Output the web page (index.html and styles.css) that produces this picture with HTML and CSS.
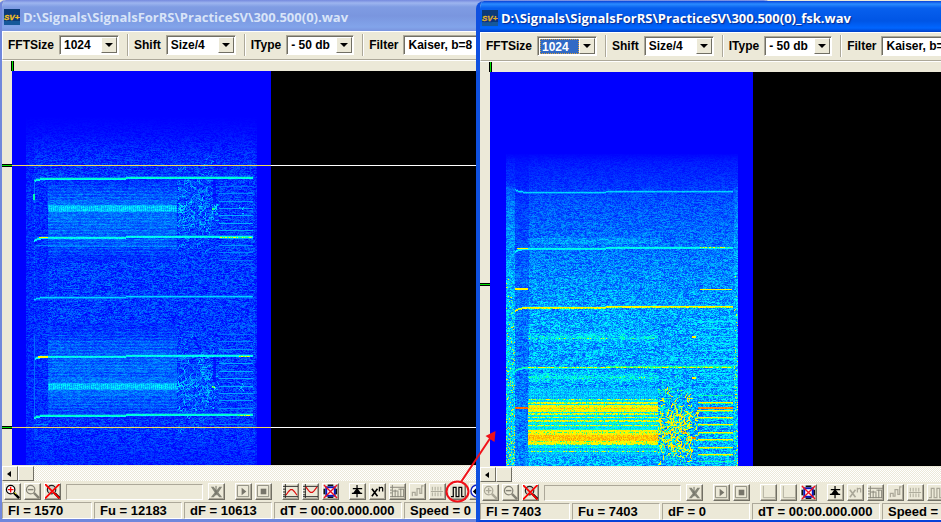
FILE: index.html
```html
<!DOCTYPE html>
<html lang="en">
<head>
    <meta charset="UTF-8">
    <meta name="viewport" content="width=device-width, initial-scale=1.0">
    <title>SV+</title>
    <link rel="stylesheet" href="styles.css">
</head>
<body>
    <!-- shared toolbar icons -->
    <svg class="symbols" aria-hidden="true">
      <symbol id="logo" viewBox="0 0 16 16">
        <rect width="16" height="16" fill="#0b3a78"/>
        <path d="M0 12h16v4H0z" fill="#15589a"/>
        <text x="0" y="11" font-family="Liberation Sans Narrow, Liberation Sans" font-size="8" font-weight="bold" font-style="italic" fill="#f8c020" stroke="#f8c020" stroke-width="0.3">SV+</text>
      </symbol>
      <symbol id="zoomIn" viewBox="0 0 16 16">
        <circle cx="6" cy="6" r="4.5" fill="#fff" stroke="currentColor" stroke-width="1.3"/>
        <path d="M9.500 9.500L15 15" stroke="currentColor" stroke-width="2.500"/>
        <path d="M10 9l2 2" stroke="#ff0" stroke-width="1"/>
        <path d="M3 6h6M6 3v6" stroke="#f00" stroke-width="1.500"/>
      </symbol>
      <symbol id="zoomInOff" viewBox="0 0 16 16">
        <circle cx="6" cy="6" r="4.5" fill="none" stroke="currentColor" stroke-width="1.3"/>
        <path d="M9.500 9.500L15 15" stroke="currentColor" stroke-width="2.500"/>
        <path d="M3 6h6M6 3v6" stroke="currentColor" stroke-width="1.500"/>
      </symbol>
      <symbol id="zoomOut" viewBox="0 0 16 16">
        <circle cx="6" cy="6" r="4.5" fill="none" stroke="currentColor" stroke-width="1.3"/>
        <path d="M9.500 9.500L15 15" stroke="currentColor" stroke-width="2.500"/>
        <path d="M3 6h6" stroke="currentColor" stroke-width="1.500"/>
      </symbol>
      <symbol id="zoomReset" viewBox="0 0 16 16">
        <circle cx="7" cy="6" r="4.5" fill="#d0d0c8" stroke="#222" stroke-width="1.300"/>
        <path d="M10.500 10l5 5" stroke="#000" stroke-width="2.500"/>
        <path d="M0 0l15.500 15.500M15.500 0L0 15.500" stroke="#f00" stroke-width="1.800"/>
      </symbol>
      <symbol id="cut" viewBox="0 0 16 16">
        <path d="M2 3h3l3 4 3-4h3l-4 6 4 5h-3l-3-3-3 3H2l4-5z" fill="#858578"/>
        <path d="M7.500 2v10" stroke="#6c6c62"/>
      </symbol>
      <symbol id="play" viewBox="0 0 16 16">
        <path d="M1.500 1.500h12v12h-12z" fill="none" stroke="#8a887c"/>
        <path d="M6 4l5 4-5 4z" fill="#77756a"/>
      </symbol>
      <symbol id="stop" viewBox="0 0 16 16">
        <path d="M1.500 1.500h12v12h-12z" fill="none" stroke="#8a887c"/>
        <path d="M5 5h6v6H5z" fill="#77756a"/>
      </symbol>
      <symbol id="peak" viewBox="0 0 16 16">
        <path d="M2.500 0v15M0 13.500h16M0 2.500h16M0 5.500h3M0 8.500h3M0 11.500h3" stroke="#222" fill="none"/>
        <path d="M3 12l3-4 2-2h2l2 2 3 4" stroke="#e01010" fill="none" stroke-width="1.300"/>
      </symbol>
      <symbol id="dip" viewBox="0 0 16 16">
        <path d="M2.500 0v15M0 13.500h16M0 2.500h16M0 5.500h3M0 8.500h3M0 11.500h3" stroke="#222" fill="none"/>
        <path d="M3 3l3 4 2 2h2l2-2 3-4" stroke="#e01010" fill="none" stroke-width="1.300"/>
      </symbol>
      <symbol id="axis" viewBox="0 0 16 16">
        <path d="M2.500 1v12.500H15" stroke="#aeab9c" fill="none"/>
      </symbol>
      <symbol id="marks" viewBox="0 0 16 16">
        <path d="M5 1.500h6M5 14h6M1.500 5v6M14 5v6" stroke="#111" stroke-width="2"/>
        <rect x="3.500" y="3.500" width="9" height="9" fill="#fff" stroke="#0818c0" stroke-width="2"/>
        <path d="M1 1l14 14M15 1L1 15" stroke="#f01020" stroke-width="1.500"/>
      </symbol>
      <symbol id="diode" viewBox="0 0 16 16">
        <path d="M7.500 1v13M3 5h10M2 10h11" stroke="#000" stroke-width="1.300"/>
        <path d="M7.500 4l4.500 6H3z" fill="#000"/>
      </symbol>
      <symbol id="power" viewBox="0 0 16 16">
        <path d="M2 5l6 8M8 5l-6 8" stroke="currentColor" stroke-width="1.700"/>
        <path d="M10 8V3M10 4.500q3-2 3.500 0V8" stroke="currentColor" fill="none" stroke-width="1.300"/>
      </symbol>
      <symbol id="grid" viewBox="0 0 16 16">
        <path d="M2.500 1v13M0 3.500h16M0 13.500h15M5.500 6v8M8.500 7v7M11.500 5v9M14.500 5v9M3 7.500h5M9 5.500h5M0 6.500h2M0 9.500h2" stroke="#858377" fill="none"/>
      </symbol>
      <symbol id="steps" viewBox="0 0 16 16">
        <path d="M2.500 13v-4h3v3h2V5h3v5h2V2h2" stroke="#aaa798" stroke-width="1.300" fill="none"/>
      </symbol>
      <symbol id="ticks" viewBox="0 0 16 16">
        <path d="M2.500 3v4M5.500 3v4M8.500 3v4M11.500 3v4M2.500 9v4M5.500 9v4M8.500 9v4M11.500 9v4M1 8h13" stroke="#aaa798" fill="none"/>
      </symbol>
      <symbol id="pulse" viewBox="0 0 16 16">
        <path d="M1 13.500h2.500v-10h3v10h3v-10h3v10H15" stroke="currentColor" stroke-width="1.300" fill="none"/>
      </symbol>
      <symbol id="phase" viewBox="0 0 16 16">
        <circle cx="7.500" cy="7.500" r="6.500" fill="#fff" stroke="#1020c0" stroke-width="1.500"/>
        <path d="M3 8l4-4v8z" fill="#000"/>
      </symbol>
    </svg>

    <div class="desktop">
      <!-- source recording -->
      <section class="window windowBack">
        <header class="titleBar">
          <svg class="logo"><use href="#logo"/></svg>
          <h1>D:\Signals\SignalsForRS\PracticeSV\300.500(0).wav</h1>
        </header>
        <div class="settings">
          <div class="field">
            <label for="size1">FFTSize</label>
            <div class="combo comboSize"><select id="size1"><option>1024</option><option>2048</option></select><i class="arrow"></i></div>
          </div>
          <div class="field">
            <label for="shift1">Shift</label>
            <div class="combo comboShift"><select id="shift1"><option>Size/4</option><option>Size/2</option></select><i class="arrow"></i></div>
          </div>
          <div class="field">
            <label for="type1">IType</label>
            <div class="combo comboType"><select id="type1"><option>- 50 db</option><option>- 70 db</option></select><i class="arrow"></i></div>
          </div>
          <div class="field">
            <label for="filter1">Filter</label>
            <div class="combo comboFilter"><select id="filter1"><option>Kaiser, b=8</option></select><i class="arrow"></i></div>
          </div>
        </div>
        <div class="plot">
          <span class="timeMark"></span>
          <span class="freqMark markHigh"></span>
          <span class="freqMark markLow"></span>
          <div class="screen">
            <canvas id="source" width="259" height="394"></canvas>
            <span class="cursorLine lineHigh"></span>
            <span class="cursorLine lineLow"></span>
          </div>
        </div>
        <div class="scrollBar">
          <button class="scrollLeft" aria-label="Scroll left"></button>
          <button class="scrollThumb" aria-label="Position"></button>
        </div>
        <div class="tools">
          <button aria-label="Zoom in"><svg><use href="#zoomIn"/></svg></button>
          <button class="off" aria-label="Zoom out"><svg><use href="#zoomOut"/></svg></button>
          <button aria-label="Reset zoom"><svg><use href="#zoomReset"/></svg></button>
          <input type="text" aria-label="Comment" readonly>
          <button class="off" aria-label="Cut"><svg><use href="#cut"/></svg></button>
          <button class="off groupStart" aria-label="Play"><svg><use href="#play"/></svg></button>
          <button class="off" aria-label="Stop"><svg><use href="#stop"/></svg></button>
          <button class="groupStart" aria-label="Maximum"><svg><use href="#peak"/></svg></button>
          <button aria-label="Minimum"><svg><use href="#dip"/></svg></button>
          <button aria-label="Clear marks"><svg><use href="#marks"/></svg></button>
          <button class="groupStart" aria-label="Detector"><svg><use href="#diode"/></svg></button>
          <button aria-label="Power"><svg><use href="#power"/></svg></button>
          <button class="off" aria-label="Grid"><svg><use href="#grid"/></svg></button>
          <button class="off" aria-label="Steps"><svg><use href="#steps"/></svg></button>
          <button class="off" aria-label="Ticks"><svg><use href="#ticks"/></svg></button>
          <button aria-label="FSK"><svg><use href="#pulse"/></svg></button>
          <button aria-label="Phase"><svg><use href="#phase"/></svg></button>
        </div>
        <footer class="status">
          <span class="cellFl">Fl = 1570</span>
          <span>Fu = 12183</span>
          <span>dF = 10613</span>
          <span class="cellTime">dT = 00:00.000.000</span>
          <span class="cellSpeed">Speed = 0</span>
        </footer>
      </section>

      <!-- result after FSK detection -->
      <section class="window windowFront">
        <header class="titleBar">
          <svg class="logo"><use href="#logo"/></svg>
          <h1>D:\Signals\SignalsForRS\PracticeSV\300.500(0)_fsk.wav</h1>
        </header>
        <div class="settings">
          <div class="field">
            <label for="size2">FFTSize</label>
            <div class="combo comboSize selected"><select id="size2"><option>1024</option><option>2048</option></select><i class="arrow"></i></div>
          </div>
          <div class="field">
            <label for="shift2">Shift</label>
            <div class="combo comboShift"><select id="shift2"><option>Size/4</option><option>Size/2</option></select><i class="arrow"></i></div>
          </div>
          <div class="field">
            <label for="type2">IType</label>
            <div class="combo comboType"><select id="type2"><option>- 50 db</option><option>- 70 db</option></select><i class="arrow"></i></div>
          </div>
          <div class="field">
            <label for="filter2">Filter</label>
            <div class="combo comboFilter"><select id="filter2"><option>Kaiser, b=8</option></select><i class="arrow"></i></div>
          </div>
        </div>
        <div class="plot">
          <span class="timeMark"></span>
          <span class="freqMark markMiddle"></span>
          <div class="screen">
            <canvas id="result" width="263" height="395"></canvas>
          </div>
        </div>
        <div class="scrollBar">
          <button class="scrollLeft" aria-label="Scroll left"></button>
          <button class="scrollThumb" aria-label="Position"></button>
        </div>
        <div class="tools">
          <button class="off pale" aria-label="Zoom in"><svg><use href="#zoomInOff"/></svg></button>
          <button class="off" aria-label="Zoom out"><svg><use href="#zoomOut"/></svg></button>
          <button aria-label="Reset zoom"><svg><use href="#zoomReset"/></svg></button>
          <input type="text" aria-label="Comment" readonly>
          <button class="off" aria-label="Cut"><svg><use href="#cut"/></svg></button>
          <button class="off groupStart" aria-label="Play"><svg><use href="#play"/></svg></button>
          <button class="off" aria-label="Stop"><svg><use href="#stop"/></svg></button>
          <button class="off groupStart" aria-label="Maximum"><svg><use href="#axis"/></svg></button>
          <button class="off" aria-label="Minimum"><svg><use href="#axis"/></svg></button>
          <button aria-label="Clear marks"><svg><use href="#marks"/></svg></button>
          <button class="groupStart" aria-label="Detector"><svg><use href="#diode"/></svg></button>
          <button class="off pale" aria-label="Power"><svg><use href="#power"/></svg></button>
          <button class="off" aria-label="Grid"><svg><use href="#grid"/></svg></button>
          <button class="off" aria-label="Steps"><svg><use href="#steps"/></svg></button>
          <button class="off" aria-label="Ticks"><svg><use href="#ticks"/></svg></button>
          <button class="off pale" aria-label="FSK"><svg><use href="#pulse"/></svg></button>
        </div>
        <footer class="status">
          <span class="cellFl">Fl = 7403</span>
          <span>Fu = 7403</span>
          <span>dF = 0</span>
          <span class="cellTime">dT = 00:00.000.000</span>
          <span class="cellSpeed">Speed = 0</span>
        </footer>
      </section>

      <!-- pointer from the FSK button to its result -->
      <svg class="pointer" width="60" height="80" viewBox="440 426 60 80">
        <ellipse cx="457.500" cy="491.500" rx="11" ry="10" fill="none" stroke="#f01018" stroke-width="2"/>
        <path d="M461 482L491 437" stroke="#f01018" stroke-width="2"/>
        <path d="M495.500 431l-10 5 9 6z" fill="#f01018"/>
      </svg>
    </div>
    <script src="spectrum.js"></script>
</body>
</html>
```
FILE: styles.css
```css
:root {
    --face: #ece9d8;
    --shadow: #aca899;
    --dark: #716f64;
    --light: #ffffff;
}
* {
    box-sizing: border-box;
}
body {
    margin: 0;
    font: bold 12px "Liberation Sans", Arial, sans-serif;
    color: #000;
    background-color: var(--face);
}
.symbols {
    display: none;
}
.desktop {
    position: relative;
    height: 100vh;
    overflow: hidden;
}
.window {
    position: absolute;
    display: flex;
    flex-direction: column;
    border: 4px solid #0842d8;
    border-top: 0;
    border-radius: 8px 8px 0 0;
    background-color: var(--face);
    overflow: hidden;
}
.windowBack {
    left: -2px;
    right: 18%;
    top: 0;
    bottom: -1px;
    border-color: #7087dc;
}
.windowFront {
    left: 476px;
    right: -240px;
    top: 1px;
    bottom: -2px;
    border-left-color: #0f50e0;
}

/* title bar */
.titleBar {
    display: flex;
    flex: none;
    align-items: center;
    gap: 3px;
    height: 31px;
    margin-left: -4px;
    padding: 2px 2px 0 6px;
    color: #fff;
    background: linear-gradient(#0842d8, #2a8bff 3px, #0860ee 7px, #0055e5 20px, #0066ff 27px, #0040c8);
    text-shadow: 1px 1px 1px #0a2a8c;
}
.windowBack .titleBar {
    color: #d8e4f8;
    background: linear-gradient(#7589de, #9db5ef 3px, #7f9ce3 7px, #7a96df 16px, #82a4ea 27px, #7a94de);
    text-shadow: none;
}
.logo {
    width: 16px;
    height: 16px;
}
h1 {
    margin: 0;
    font: bold 13px "Open Sans", "Noto Sans", sans-serif;
    white-space: nowrap;
}

/* settings row */
.settings {
    display: flex;
    flex: none;
    align-items: center;
    height: 29px;
    border-top: 1px solid var(--light);
    border-left: 1px solid var(--light);
    border-bottom: 1px solid var(--shadow);
    padding: 0 0 2px 5px;
}
.field {
    display: flex;
    align-items: center;
    height: 22px;
    padding-right: 8px;
    white-space: nowrap;
}
.field + .field {
    border-left: 1px solid var(--shadow);
    box-shadow: inset 1px 0 var(--light);
    padding-left: 6px;
}
.field label {
    padding-right: 5px;
}
.combo {
    display: flex;
    height: 20px;
    padding: 1px;
    border: 1px solid;
    border-color: var(--shadow) var(--light) var(--light) var(--shadow);
    background-color: #fff;
    box-shadow: inset 1px 1px var(--dark);
}
.comboSize {
    width: 60px;
}
.comboShift {
    width: 70px;
}
.comboType {
    width: 68px;
}
.comboFilter {
    width: 110px;
}
.combo select {
    flex: 1;
    min-width: 0;
    margin: 1px 0 0 1px;
    padding: 0 0 0 2px;
    border: 0;
    border-radius: 0;
    appearance: none;
    background-color: #fff;
    color: #000;
    font: inherit;
}
.selected select {
    color: #fff;
    background-color: #316ac5;
    border: 1px dotted #d8a040;
    padding-left: 1px;
}
.arrow {
    display: flex;
    flex: none;
    align-items: center;
    justify-content: center;
    width: 16px;
    border: 1px solid;
    border-color: var(--light) var(--dark) var(--dark) var(--light);
    background-color: var(--face);
    pointer-events: none;
}
.arrow::after {
    content: "";
    border: 4px solid transparent;
    border-top-color: #000;
    border-bottom: 0;
}

/* spectrogram */
.plot {
    position: relative;
    display: flex;
    flex: 1;
    min-height: 0;
    padding: 10px 0 0 10px;
    border-top: 1px solid var(--light);
}
.screen {
    position: relative;
    flex: 1;
    overflow: hidden;
    background-color: #000;
}
.screen canvas {
    display: block;
}
.timeMark {
    position: absolute;
    left: 9px;
    top: 0;
    width: 3px;
    height: 10px;
    border: solid #000;
    border-width: 0 1px;
    background-color: #0d0;
}
.freqMark {
    position: absolute;
    left: 0;
    width: 10px;
    height: 3px;
    border: solid #000;
    border-width: 1px 0;
    background-color: #0d0;
}
.markHigh {
    top: 103px;
}
.markLow {
    top: 365px;
}
.markMiddle {
    top: 221px;
}
.cursorLine {
    position: absolute;
    left: 0;
    right: 0;
    height: 1px;
    background: linear-gradient(90deg, #f0d860 259px, #fff 259px);
}
.lineHigh {
    top: 94px;
}
.lineLow {
    top: 356px;
}

/* scroll bar */
.scrollBar {
    display: flex;
    flex: none;
    height: 16px;
    border-top: 1px solid var(--face);
    background: repeating-conic-gradient(#fff 0 25%, var(--face) 0 50%) 0 0 / 2px 2px;
}
button {
    padding: 0;
    border: 1px solid;
    border-color: var(--light) var(--dark) var(--dark) var(--light);
    background-color: var(--face);
    color: #000;
}
.scrollLeft,
.scrollThumb {
    width: 16px;
}
.scrollLeft::after {
    content: "";
    display: block;
    width: 0;
    margin-left: 4px;
    border: 3px solid transparent;
    border-right: 4px solid #000;
    border-left: 0;
}

/* buttons */
.tools {
    display: flex;
    flex: none;
    align-items: center;
    gap: 3px;
    height: 21px;
    padding: 0 2px;
}
.tools button {
    flex: none;
    width: 17px;
    height: 17px;
    overflow: hidden;
    box-shadow: inset -1px -1px var(--shadow);
}
.tools svg {
    display: block;
    width: 15px;
    height: 15px;
}
.tools .off {
    color: #858377;
}
.tools .pale {
    color: #aaa798;
}
.tools .groupStart {
    margin-left: 7px;
}
.tools input {
    flex: none;
    width: 137px;
    height: 16px;
    margin: 0 2px;
    padding: 0 3px;
    border: 1px solid;
    border-color: var(--shadow) var(--light) var(--light) var(--shadow);
    background-color: var(--face);
    font: inherit;
}

/* status bar */
.status {
    display: flex;
    flex: none;
    gap: 2px;
    height: 17px;
    font-size: 13px;
    line-height: 16px;
    white-space: nowrap;
}
.status span {
    flex: none;
    width: 88px;
    padding-left: 5px;
    border: 1px solid;
    border-color: var(--shadow) var(--light) var(--light) var(--shadow);
}
.status .cellFl {
    width: 90px;
}
.status .cellTime {
    width: 128px;
}
.status .cellSpeed {
    flex: 1;
}
.pointer {
    position: absolute;
    left: 440px;
    top: 426px;
}
```
FILE: spectrum.js
```js
// repeatable noise
let seed = 7;
function rnd() {
  seed = (seed + 0x6D2B79F5) | 0;
  let t = Math.imul(seed ^ (seed >>> 15), 1 | seed);
  t = (t + Math.imul(t ^ (t >>> 7), 61 | t)) ^ t;
  return ((t ^ (t >>> 14)) >>> 0) / 4294967296;
}

// level 0..1 -> blue, cyan, green, yellow, red
const stops = [
  [0, 0, 0, 255],
  [0.4, 0, 255, 255],
  [0.5, 0, 255, 150],
  [0.56, 255, 255, 0],
  [0.68, 255, 230, 0],
  [0.8, 255, 160, 0],
  [1, 255, 50, 0]
];
function color(v) {
  v = Math.max(0, Math.min(1, v));
  let i = 1;
  while (stops[i][0] < v) i++;
  const a = stops[i - 1], b = stops[i];
  const k = (v - a[0]) / (b[0] - a[0]);
  return [1, 2, 3].map(n => a[n] + (b[n] - a[n]) * k);
}

// piecewise linear curve through [x, y] points
function curve(points, x) {
  if (x <= points[0][0]) return points[0][1];
  for (let i = 1; i < points.length; i++) {
    const [x1, y1] = points[i - 1], [x2, y2] = points[i];
    if (x <= x2) return y1 + (y2 - y1) * (x - x1) / (x2 - x1);
  }
  return points[points.length - 1][1];
}

class Spectrum {
  constructor(id) {
    this.canvas = document.getElementById(id);
    this.w = this.canvas.width;
    this.h = this.canvas.height;
    this.data = new Float32Array(this.w * this.h);
  }
  // fill(x, y, previous level) gives the new level
  area(x1, y1, x2, y2, fill) {
    for (let y = Math.max(0, y1); y < Math.min(y2, this.h); y++) {
      for (let x = Math.max(0, x1); x < Math.min(x2, this.w); x++) {
        const i = y * this.w + x;
        this.data[i] = fill(x, y, this.data[i]);
      }
    }
  }
  line(x1, x2, y, v, jitter = 0.05, size = 1) {
    this.area(x1, y, x2, y + size, (x, yy, old) => Math.max(old, v + (rnd() - 0.5) * jitter));
  }
  // carrier with the settling curl at its start
  carrier(x1, x2, y, v, curl, glow = 0.85) {
    for (let x = x1; x < x2; x++) {
      const yy = Math.round(y + curl * Math.exp(-(x - x1) / 4) - (x - x1) / (x2 - x1) * 1.2);
      this.line(x, x + 1, yy, v, 0.05);
      this.line(x, x + 1, yy + 1, v * glow, 0.08);
      this.line(x, x + 1, yy - 1, v * 0.4, 0.1);
    }
  }
  // short wavy strokes
  swirl(cx, cy, rx, ry, v, count) {
    for (let n = 0; n < count; n++) {
      let x = cx + (rnd() * 2 - 1) * rx;
      let y = cy + (rnd() + rnd() - 1) * ry;
      let a = rnd() * 6.28;
      for (let s = 0; s < 5; s++) {
        if (Math.abs(x - cx) < rx) this.line(Math.round(x), Math.round(x) + 1, Math.round(y), v, 0.15);
        x += Math.cos(a);
        y += Math.sin(a);
        a += (rnd() - 0.5) * 1.5;
      }
    }
  }
  draw() {
    const ctx = this.canvas.getContext("2d");
    const image = ctx.createImageData(this.w, this.h);
    this.data.forEach((v, i) => {
      const c = color(v);
      image.data.set([c[0], c[1], c[2], 255], i * 4);
    });
    ctx.putImageData(image, 0, 0);
  }
}

function drawSource() {
  const s = new Spectrum("source");
  const level = [[45, 0], [62, 0.02], [85, 0.065], [110, 0.09], [330, 0.095], [365, 0.075], [394, 0.05]];
  let n = 0.5;
  s.area(14, 45, 245, 394, (x, y) => {
    n = n * 0.35 + rnd() * 0.65;
    const edge = x < 22 || x > 242 ? 0.7 : 1;
    return curve(level, y) * edge * Math.max(0, n * 2.8 - 0.4);
  });
  // quiet gap before the data
  s.area(23, 115, 36, 345, (x, y, v) => v * 0.75);

  for (const mid of [137, 315]) {
    const top = mid === 137 ? 108 : 252;
    const end = mid === 137 ? 190 : 348;
    for (let y = top; y < end; y++) {
      const d = Math.abs(y - mid);
      let v = 0.01 + 0.08 * Math.exp(-d / 30) + (y % 3 === 0 ? 0.05 : 0);
      if (mid === 137 && y > 145 && y < 176) v += 0.03;
      if (mid === 315 && y > 268 && y < 300) v += 0.03;
      // fade to the noise at both ends of the block
      v *= Math.min(1, (y - top + 4) / 18, (end - y + 2) / 14);
      if (d < 9) v = 0.11;
      if (d < 4) v = 0.21;
      s.area(36, y, 165, y + 1, (x, yy, old) => old * 0.7 + v + (d < 3 && x % 2 ? 0.07 : 0));
    }
    s.swirl(183, mid, 18, 55, 0.19, 170);
    s.swirl(183, mid, 18, 38, 0.27, 60);
    s.swirl(168, mid, 4, 8, 0.3, 10);
    s.swirl(204, mid, 2, 20, 0.28, 8);
    s.line(200, 203, mid, 0.52, 0.1, 2);
    s.swirl(229, mid, 2, 8, 0.28, 5);
    s.area(201, mid - 30, 204, mid - 4, (x, y, v) => v * 0.4);
  }
  for (let k = 0; k < 11; k++) s.line(207, 241, Math.round(114.7 + k * 7.4), 0.17 + 0.1 * Math.sin(k / 10 * 3.14), 0.03);
  for (let k = 0; k < 12; k++) s.line(207, 241, Math.round(262.7 + k * 7.4), 0.17 + 0.1 * Math.sin(k / 12 * 3.14), 0.03);

  s.carrier(22, 241, 107, 0.46, 2);
  s.carrier(22, 241, 166, 0.43, 3);
  s.carrier(22, 241, 226, 0.33, 2, 0.6);
  s.carrier(22, 241, 285, 0.43, 2);
  s.carrier(22, 241, 344, 0.46, 2);
  s.line(27, 36, 166, 0.58);
  s.line(26, 36, 285, 0.6, 0.05, 2);
  s.line(208, 240, 166, 0.53, 0.15);
  s.line(227, 238, 285, 0.55, 0.12);
  s.line(225, 238, 344, 0.53, 0.12);
  s.line(36, 165, 175, 0.2, 0.12);
  s.line(24, 36, 174, 0.2);
  s.line(24, 36, 353, 0.22);
  s.line(207, 241, 353, 0.2);
  s.area(22, 110, 23, 132, () => 0.18);
  s.area(21, 123, 23, 129, () => 0.48);
  s.area(22, 265, 23, 345, () => 0.17);
  s.draw();
}

function drawResult() {
  const s = new Spectrum("result");
  const level = [[80, 0], [90, 0.04], [112, 0.08], [130, 0.13], [180, 0.19], [215, 0.23], [240, 0.26], [395, 0.28]];
  let n = 0.5;
  s.area(16, 82, 248, 395, (x, y) => {
    n = n * 0.3 + rnd() * 0.7;
    let v = curve(level, y) * (0.3 + n * 1.4);
    if (x > 24 && x < 39) v *= 0.7;
    return v;
  });
  // switch on and off clicks
  s.area(16, 115, 25, 395, (x, y, v) => v + 0.05 + (rnd() < (y - 180) / 900 ? 0.25 : 0));
  s.area(244, 115, 248, 395, (x, y, v) => v + 0.05 + (rnd() < (y - 190) / 1100 ? 0.25 : 0));

  for (const y of [169, 264, 267, 304, 307]) {
    s.area(38, y - 3, 168, y + 3, (x, yy, v) => v + 0.05);
  }
  s.line(38, 168, 266, 0.33, 0.48);
  s.line(38, 168, 305, 0.33, 0.46);

  // data block
  for (let y = 316; y < 384; y++) {
    let v = y % 3 === 0 ? 0.47 : 0.39;
    if ([330, 331, 341, 342, 345, 348, 349, 353].includes(y)) v = 0.6;
    if (y > 332 && y < 340) v = 0.63;
    if (y > 357 && y < 373) v = y % 3 === 0 ? 0.58 : 0.64;
    if (y > 362 && y < 369) v = 0.76;
    if (y < 328 || y > 375) v = (v + 0.25) / 2;
    s.area(38, y, 168, y + 1, x => v + (rnd() - 0.6) * 0.16 + (x % 2 ? 0 : -0.03));
  }
  s.line(38, 168, 327, 0.5, 0.2);
  s.line(38, 168, 336, 0.72, 0.12);
  s.line(38, 168, 379, 0.5, 0.2);
  s.swirl(185, 350, 17, 52, 0.46, 150);
  s.swirl(185, 354, 17, 42, 0.6, 170);
  s.swirl(183, 364, 17, 14, 0.74, 18);
  s.swirl(206, 350, 2, 30, 0.58, 14);

  for (let k = 0; k < 20; k++) {
    const y = Math.round(248.7 + k * 7.4);
    const strong = y > 325 && y < 384;
    s.line(208, 243, y, strong ? 0.62 : y > 315 ? 0.48 : 0.36, 0.08);
    if (strong) s.line(208, 243, y + 1, 0.5, 0.1);
  }

  s.carrier(25, 243, 120, 0.33, -3, 0.6);
  s.carrier(25, 243, 176, 0.43, 3);
  s.carrier(25, 243, 235, 0.62, 3, 0.88);
  s.carrier(25, 243, 295, 0.5, 3, 0.8);
  s.line(38, 243, 295, 0.55, 0.12);
  s.line(27, 38, 176, 0.6);
  s.line(210, 240, 175, 0.53, 0.15);
  s.line(25, 38, 216, 0.6, 0.05, 2);
  s.line(210, 242, 217, 0.6, 0.05);
  s.line(25, 38, 335, 0.9, 0.1, 2);
  s.line(208, 243, 335, 0.84, 0.1, 2);
  s.line(202, 206, 264, 0.6, 0.05, 2);
  s.line(202, 206, 305, 0.6, 0.05, 2);
  s.line(202, 206, 365, 0.88, 0.05, 2);
  s.line(16, 248, 394, 0.5, 0.2);
  s.draw();
}

drawSource();
drawResult();
```
